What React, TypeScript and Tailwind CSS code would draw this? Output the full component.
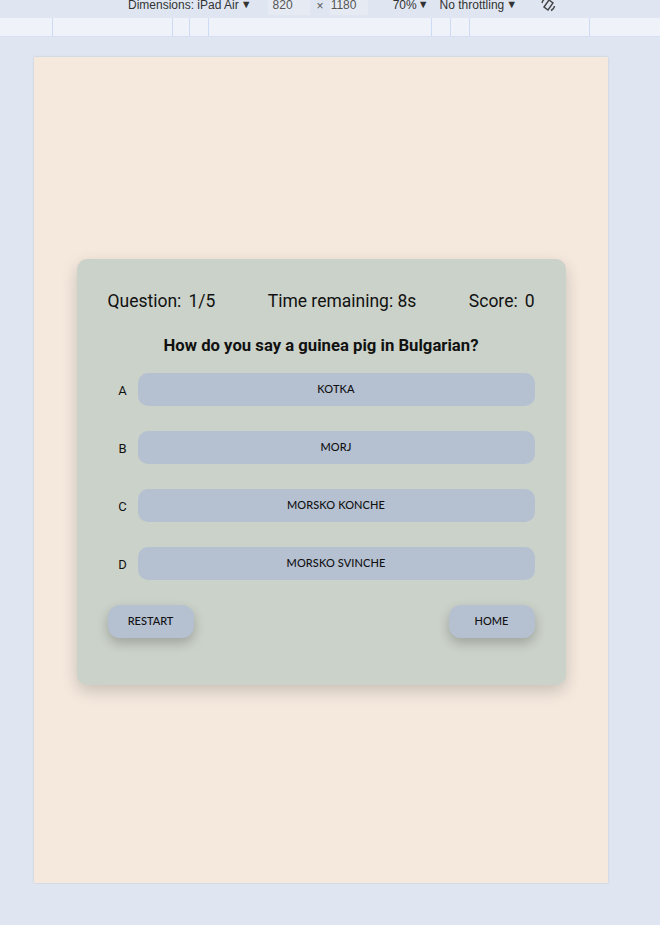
import React from 'react';

const options = [
  { letter: 'A', text: 'KOTKA' },
  { letter: 'B', text: 'MORJ' },
  { letter: 'C', text: 'MORSKO KONCHE' },
  { letter: 'D', text: 'MORSKO SVINCHE' },
];

const DevToolbar = () => (
  <div className="h-[18px] bg-[#dfe6f2] overflow-hidden relative font-['Liberation_Sans',sans-serif] text-[12px] text-[#333]">
    <div className="flex items-start -mt-[5px] h-[24px]">
      <span className="ml-[128px] leading-[20px]">Dimensions: iPad Air</span>
      <span className="ml-[2px] text-[11px] leading-[19px]">▼</span>
      <span className="ml-[16px] w-[42px] bg-[#e6ebf3] pl-[5px] text-[#555] leading-[20px]">820</span>
      <span className="ml-[7px] text-[#555] leading-[22px]">×</span>
      <span className="ml-[6px] w-[38px] bg-[#e6ebf3] pl-[1px] text-[#555] leading-[20px]">1180</span>
      <span className="ml-[25px] leading-[20px]">70%</span>
      <span className="ml-[1px] text-[11px] leading-[19px]">▼</span>
      <span className="ml-[11px] leading-[20px]">No throttling</span>
      <span className="ml-[2px] text-[11px] leading-[19px]">▼</span>
      <svg className="ml-[24px] mt-[2px]" width="15" height="15" viewBox="0 0 15 15" fill="none" stroke="#444" strokeWidth="1.4">
        <path d="M3 10 L8 3 L12 6 L7 13 Z" />
        <path d="M1 6 A6 6 0 0 1 5 1.5" />
        <path d="M13.5 9 A6 6 0 0 1 10 13.5" />
      </svg>
    </div>
  </div>
);

const Ruler = () => {
  const lines = [52, 172, 189, 208, 431, 450, 469, 589];
  return (
    <div className="h-[19px] bg-[#eff3f9] border-b border-[#d5e1f3] relative">
      {lines.map((x) => (
        <div key={x} className="absolute top-0 bottom-0 w-px bg-[#cddcf4]" style={{ left: x }} />
      ))}
    </div>
  );
};

export default function App() {
  return (
    <div className="w-[660px] h-[925px] bg-[#dfe6f2] overflow-hidden font-['Roboto',sans-serif]">
      <DevToolbar />
      <Ruler />
      <div className="pt-[20px] pl-[34px]">
        <div className="w-[574px] h-[826px] bg-[#f5e9de] shadow-[0_0_2px_rgba(0,0,0,0.15)] flex items-center justify-center">
          <div className="w-[489px] h-[426px] mt-[3px] bg-[#cbd2c9] rounded-[10px] shadow-[0_6px_16px_rgba(0,0,0,0.18)] px-[31px] pt-[30px] flex flex-col">
            <div className="flex justify-between items-center text-[17.5px] leading-[24px] text-[#111]">
              <div>
                Question:<span className="ml-[7px]">1/5</span>
              </div>
              <div>Time remaining: 8s</div>
              <div>
                Score:<span className="ml-[7px]">0</span>
              </div>
            </div>
            <div className="mt-[21px] text-center font-bold text-[16.7px] leading-[24px] text-[#111]">
              How do you say a guinea pig in Bulgarian?
            </div>
            <div className="mt-[15px] flex flex-col gap-[25px]">
              {options.map((o) => (
                <div key={o.letter} className="flex items-center">
                  <div className="w-[30px] text-center text-[13px] text-[#111] pt-[4px]">{o.letter}</div>
                  <button className="flex-1 h-[33px] rounded-[10px] bg-[#b5c0d1] text-[11px] font-medium text-[#111] font-['Lato',sans-serif] tracking-[0.1px]">
                    {o.text}
                  </button>
                </div>
              ))}
            </div>
            <div className="mt-[25px] flex justify-between">
              <button className="w-[86px] h-[33px] rounded-[12px] bg-[#b5c0d1] text-[11px] font-medium text-[#111] font-['Lato',sans-serif] shadow-[0_5px_12px_rgba(0,0,0,0.22)]">
                RESTART
              </button>
              <button className="w-[86px] h-[33px] rounded-[12px] bg-[#b5c0d1] text-[11px] font-medium text-[#111] font-['Lato',sans-serif] shadow-[0_5px_12px_rgba(0,0,0,0.22)]">
                HOME
              </button>
            </div>
          </div>
        </div>
      </div>
    </div>
  );
}
